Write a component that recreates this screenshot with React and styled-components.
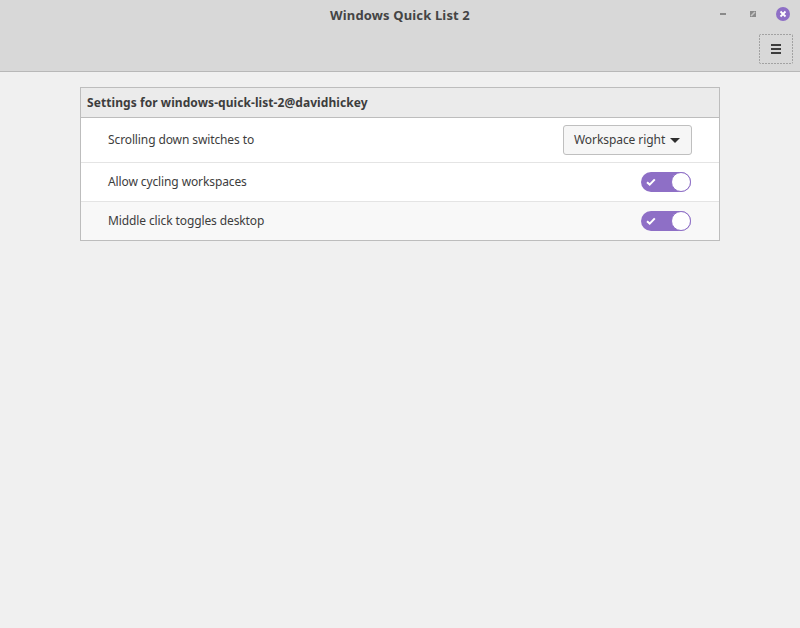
import React from "react";
import styled, { createGlobalStyle } from "styled-components";

const Global = createGlobalStyle`
  html, body { margin: 0; padding: 0; }
  body { background: #f0f0f0; font-family: "Noto Sans", sans-serif; font-size: 12px; color: #3d3d3d; }
  #root { height: 628px; overflow: hidden; }
`;

const Page = styled.div`
  display: flex;
  flex-direction: column;
  height: 628px;
`;
const HeaderBar = styled.header`
  height: 71px;
  background: #d8d8d8;
  border-bottom: 1px solid #b8b8b8;
  display: flex;
  flex-direction: column;
`;
const TitleRow = styled.div`
  height: 29px;
  display: flex;
  align-items: center;
  justify-content: center;
  position: relative;
`;
const Title = styled.h1`
  margin: 0;
  font-size: 13px;
  font-weight: 700;
  letter-spacing: 0.15px;
  color: #444;
`;
const WindowControls = styled.div`
  position: absolute;
  right: 10px;
  top: 7px;
  display: flex;
  align-items: center;
  gap: 15px;
`;
const ControlIcon = styled.svg`
  display: block;
  width: 14px;
  height: 14px;
`;
const ToolRow = styled.div`
  display: flex;
  justify-content: flex-end;
  padding: 5px 7px 0 0;
`;
const MenuButton = styled.button`
  width: 34px;
  height: 30px;
  padding: 0;
  border: none;
  border-radius: 2px;
  background-color: transparent;
  background-image:
    repeating-linear-gradient(90deg, #a2a2a2 0 2px, transparent 2px 3px),
    repeating-linear-gradient(90deg, #a2a2a2 0 2px, transparent 2px 3px),
    repeating-linear-gradient(0deg, #a2a2a2 0 2px, transparent 2px 3px),
    repeating-linear-gradient(0deg, #a2a2a2 0 2px, transparent 2px 3px);
  background-size: 100% 1px, 100% 1px, 1px 100%, 1px 100%;
  background-position: 0 0, 0 100%, 0 0, 100% 0;
  background-repeat: no-repeat;
  display: flex;
  align-items: center;
  justify-content: center;
`;
const Content = styled.main`
  padding: 15px 80px 0;
`;
const Panel = styled.section`
  border: 1px solid #bdbdbd;
  background: #fff;
`;
const PanelHeader = styled.div`
  height: 29px;
  background: #ebebeb;
  border-bottom: 1px solid #bdbdbd;
  padding-left: 6px;
  display: flex;
  align-items: center;
  font-weight: 700;
  letter-spacing: 0.07px;
  color: #3d3d3d;
`;
const Row = styled.div`
  height: ${(p) => p.$h}px;
  padding: 0 28px 0 27px;
  display: flex;
  align-items: center;
  justify-content: space-between;
  background: ${(p) => (p.$alt ? "#f8f8f8" : "#fff")};
  border-top: ${(p) => (p.$first ? "none" : "1px solid #e4e4e4")};
`;
const Label = styled.span`
  color: #3d3d3d;
  letter-spacing: -0.11px;
  margin-top: -2px;
`;
const Select = styled.button`
  width: 129px;
  height: 30px;
  box-sizing: border-box;
  background: #f6f6f6;
  border: 1px solid #bfbfbf;
  border-radius: 3px;
  padding: 0 0 2px 10px;
  margin-right: -1px;
  display: flex;
  align-items: center;
  gap: 5px;
  font: inherit;
  letter-spacing: -0.07px;
  color: #3d3d3d;
`;
const Caret = styled.span`
  width: 0;
  height: 0;
  margin-top: 2px;
  border-left: 5px solid transparent;
  border-right: 5px solid transparent;
  border-top: 5px solid #2e2e2e;
`;
const Switch = styled.div`
  width: 50px;
  height: 20px;
  box-sizing: border-box;
  border-radius: 10px;
  background: #8e6fc6;
  display: flex;
  align-items: center;
  justify-content: space-between;
  padding-left: 5px;
`;
const Knob = styled.span`
  width: 20px;
  height: 20px;
  box-sizing: border-box;
  border-radius: 50%;
  background: #fff;
  border: 1px solid #8e6fc6;
`;

const Check = () => (
  <svg width="10" height="8" viewBox="0 0 10 8">
    <path d="M1 4.2 L3.7 6.6 L8.8 1.4" fill="none" stroke="#fff" strokeWidth="2" />
  </svg>
);

export default function App() {
  return (
    <Page>
      <Global />
      <HeaderBar>
        <TitleRow>
          <Title>Windows Quick List 2</Title>
          <WindowControls>
            <ControlIcon viewBox="0 0 14 14">
              <rect x="2" y="6" width="6" height="2" fill="#8a8a8a" />
            </ControlIcon>
            <ControlIcon viewBox="0 0 14 14">
              <rect x="3" y="4" width="6" height="6" fill="#8a8a8a" />
              <path d="M4 9 L8 5" stroke="#c4c4c4" strokeWidth="1.6" />
            </ControlIcon>
            <ControlIcon viewBox="0 0 14 14">
              <circle cx="7" cy="7" r="7" fill="#8e6fc6" />
              <path d="M4.5 4.5 L9.5 9.5 M9.5 4.5 L4.5 9.5" stroke="#fff" strokeWidth="1.8" />
            </ControlIcon>
          </WindowControls>
        </TitleRow>
        <ToolRow>
          <MenuButton aria-label="menu">
            <svg width="10" height="10" viewBox="0 0 10 10">
              <path d="M0 0h10v2H0zM0 4h10v2H0zM0 8h10v2H0z" fill="#3d3d3d" />
            </svg>
          </MenuButton>
        </ToolRow>
      </HeaderBar>
      <Content>
        <Panel>
          <PanelHeader>Settings for windows-quick-list-2@davidhickey</PanelHeader>
          <Row $h={44} $first>
            <Label>Scrolling down switches to</Label>
            <Select>
              Workspace right
              <Caret />
            </Select>
          </Row>
          <Row $h={38}>
            <Label>Allow cycling workspaces</Label>
            <Switch>
              <Check />
              <Knob />
            </Switch>
          </Row>
          <Row $h={38} $alt>
            <Label>Middle click toggles desktop</Label>
            <Switch>
              <Check />
              <Knob />
            </Switch>
          </Row>
        </Panel>
      </Content>
    </Page>
  );
}
